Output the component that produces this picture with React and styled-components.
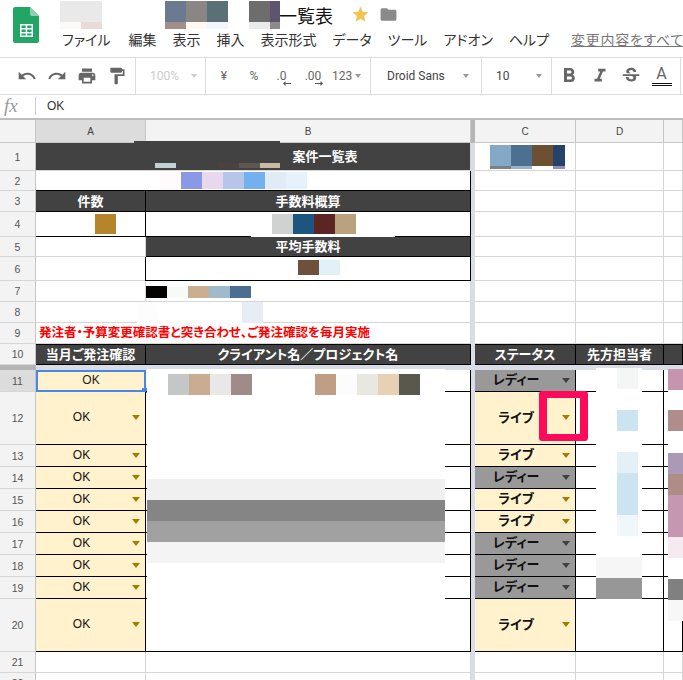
import React from "react"
import styled, { createGlobalStyle } from "styled-components"
import { MdUndo, MdRedo, MdPrint, MdFormatPaint, MdFormatBold, MdFormatItalic, MdStrikethroughS, MdStar, MdFolder } from "react-icons/md"

const CJK = `"Liberation Sans", "Noto Sans CJK JP", sans-serif`

const GlobalStyle = createGlobalStyle`
  html, body { margin: 0; padding: 0; background: #fff; overflow: hidden; }
  body { font-family: ${CJK}; font-feature-settings: "palt"; }
`

const menus = ["ファイル", "編集", "表示", "挿入", "表示形式", "データ", "ツール", "アドオン", "ヘルプ"]

// [left, top, width, [[width, height, colour]...]] pixel-blur patches that hide names
const patches = [
  [60, 1, 42, [[42, 21, "#e9e9e9"], [21, 7, "#fcfaf8"], [21, 7, "#e9dbd8"]]],
  [165, 1, 63, [[21, 21, "#6b7a90"], [21, 21, "#8a8683"], [21, 21, "#5a7078"], [21, 7, "#a08e8a"], [21, 7, "#fdf8f0"], [21, 7, "#f0f6fa"]]],
  [249, 1, 31, [[21, 21, "#6d6d6d"], [10, 21, "#5f5470"], [21, 7, "#eaeaea"], [10, 7, "#8e8a88"]]],
  [134, 141, 146, [[146, 2, "#424242"]]],
  [155, 163, 125, [[21, 5, "#c2cfd6"], [42, 5, "#424242"], [21, 5, "#4a4240"], [21, 5, "#60564e"], [20, 5, "#c9baa8"]]],
  [160, 172, 147, [[21, 17, "#fffbfc"], [21, 17, "#8a99e6"], [21, 17, "#e8d8ee"], [21, 17, "#b6c6ea"], [21, 17, "#73b0f0"], [21, 17, "#e0ebf6"], [21, 17, "#e6f2fb"]]],
  [95, 214, 21, [[21, 20, "#b5852a"]]],
  [251, 214, 144, [[21, 20, "#fff"], [21, 20, "#ced3d1"], [21, 20, "#1c5680"], [21, 20, "#5d2424"], [21, 20, "#bba27e"], [39, 20, "#fff"], [144, 3, "#fff"]]],
  [298, 260, 42, [[21, 15, "#6f513b"], [21, 15, "#e2f1f8"]]],
  [146, 286, 105, [[21, 12, "#050200"], [21, 12, "#f8faf8"], [21, 12, "#c9ae92"], [21, 12, "#9fb9cd"], [21, 12, "#4d6e90"]]],
  [137, 302, 126, [[21, 21, "#fdfdfd"], [84, 21, "#fff"], [21, 21, "#e6edf5"]]],
  [490, 145, 75, [[21, 21, "#83a9c6"], [21, 21, "#4d7090"], [21, 21, "#6d4f31"], [12, 21, "#27426a"], [21, 3, "#7c8085"], [21, 3, "#9ab0c6"], [21, 3, "#fff"], [12, 3, "#8d90bc"]]],
  [147, 369, 298, [
    [298, 5, "#fff"],
    [21, 21, "#fff"], [21, 21, "#c5c6c8"], [21, 21, "#c8ad93"], [21, 21, "#e8e8e8"], [21, 21, "#a08b8a"], [63, 21, "#fff"], [21, 21, "#c09e85"], [21, 21, "#fcfcfc"], [21, 21, "#e8e8e1"], [21, 21, "#e8d0b4"], [21, 21, "#58584f"], [25, 21, "#fff"],
    [298, 84, "#fff"], [298, 21, "#f0f0f0"], [298, 21, "#858585"], [298, 21, "#a1a1a1"], [298, 21, "#f4f4f4"], [298, 87, "#fff"],
  ]],
  [596, 368, 46, [[46, 189, "#fff"], [46, 21, "#f6f6f6"], [46, 21, "#979797"]]],
  [617, 368, 21, [[21, 21, "#f4f6f5"], [21, 21, "#fff"], [21, 21, "#cce3f0"], [21, 21, "#fff"], [21, 21, "#e3f0f6"], [21, 42, "#cce3f0"], [21, 21, "#f0f7fb"]]],
  [668, 369, 15, [[15, 21, "#c495ad"], [15, 20, "#fff"], [15, 21, "#b08c8a"], [15, 22, "#fff"], [15, 21, "#ab9ab5"], [15, 21, "#b08c86"], [15, 42, "#c697b0"], [15, 21, "#f5eaef"], [15, 21, "#fff"], [15, 21, "#808080"], [15, 21, "#f7f7f7"]]],
]

const Page = styled.div`
  position: relative;
  width: 683px;
  height: 680px;
  overflow: hidden;
  background: #fff;
`

const TitleBar = styled.header`
  display: flex;
  height: 57px;
`

const LogoSlot = styled.div`
  flex: none;
  width: 52px;
  padding: 7px 0 0 13px;
  box-sizing: border-box;
`

const TitleColumn = styled.div`
  display: flex;
  flex-direction: column;
`

const TitleLine = styled.div`
  display: flex;
  align-items: center;
  height: 29px;
  padding-left: 227px;
  font-size: 18px;
  color: #111;
  svg { flex: none; }
`

const DocName = styled.span`
  width: 54px;
  margin-right: 18px;
`

const MenuLine = styled.nav`
  display: flex;
  align-items: center;
  height: 20px;
  padding-left: 10px;
  font-size: 14px;
  color: #333;
  white-space: nowrap;
`

const MenuItem = styled.span`
  margin-right: 16px;
  &:first-child { margin-right: 18px; }
`

const SaveNote = styled.span`
  margin-left: 6px;
  color: #777;
  letter-spacing: 0.7px;
  text-decoration: underline;
`

const Toolbar = styled.div`
  display: flex;
  height: 36px;
  border-top: 1px solid #dcdcdc;
  border-bottom: 1px solid #dcdcdc;
`

const ToolGroup = styled.div`
  display: flex;
  align-items: center;
  flex: none;
  box-sizing: border-box;
  width: ${p => p.$w}px;
  padding-left: ${p => p.$pad || 0}px;
  border-right: 1px solid #dcdcdc;
  font-family: Roboto, sans-serif;
  font-size: 12px;
  color: #666;
  white-space: nowrap;
`

const ToolIcon = styled.span`
  display: flex;
  align-items: center;
  justify-content: center;
  flex: none;
  width: ${p => p.$w || 30}px;
  color: #666;
  font-size: ${p => p.$size || 20}px;
`

const Caret = styled.span`
  flex: none;
  width: 0;
  height: 0;
  margin-left: ${p => p.$gap || 6}px;
  border: 3px solid transparent;
  border-top: 4px solid ${p => p.$color || "#999"};
  border-bottom: 0;
`

const ToolText = styled.span`
  color: ${p => p.$color || "#666"};
`

const Decimal = styled.span`
  position: relative;
  display: flex;
  justify-content: center;
  flex: none;
  width: ${p => p.$w}px;
  line-height: 14px;
  svg { position: absolute; left: ${p => p.$arrow}px; top: 12px; }
`

const LetterA = styled.span`
  display: block;
  width: 20px;
  padding-bottom: 2px;
  border-bottom: 3px double #111;
  color: #666;
  font-size: 16px;
  line-height: 15px;
  text-align: center;
`

const FormulaBar = styled.div`
  display: flex;
  align-items: center;
  height: 24px;
  padding-bottom: 2px;
  box-sizing: border-box;
  font-size: 12px;
  color: #333;
`

const Fx = styled.span`
  width: 36px;
  padding-left: 4px;
  box-sizing: border-box;
  border-right: 1px solid #ccc;
  margin-right: 11px;
  font-family: "Liberation Serif", serif;
  font-style: italic;
  font-size: 19px;
  line-height: 18px;
  color: #999;
`

const Sheet = styled.main`
  border-top: 2px solid #bdbdbd;
  margin-top: -1px;
`

const Row = styled.div`
  display: grid;
  grid-template-columns: 36px 110px 325px 4px 101px 88px 1fr;
  height: ${p => p.$h}px;
`

const ColHead = styled.div`
  display: flex;
  align-items: center;
  justify-content: center;
  box-sizing: border-box;
  background: ${p => (p.$active ? "#dcdcdc" : "#f3f3f3")};
  border-right: 1px solid #c6c6c6;
  border-bottom: 1px solid #c6c6c6;
  font-size: 10px;
  color: #444;
`

const RowHead = styled(ColHead)`
  font-size: 10.5px;
  color: #555;
  border-bottom-color: #d6d6d6;
`

const FreezeV = styled.div`
  background: ${p => (p.$head ? "#b5b5b5" : "#d9dde6")};
`

const FreezeH = styled.div`
  height: 5px;
  background: #d9dde6;
  display: grid;
  grid-template-columns: 36px 1fr;
`

const FreezeCorner = styled.div`
  background: #b5b5b5;
`

const Cell = styled.div`
  position: relative;
  display: flex;
  align-items: center;
  justify-content: center;
  box-sizing: border-box;
  min-width: 0;
  grid-column: span ${p => p.$span || 1};
  border-right: 1px solid ${p => (p.$line ? "#000" : "#d6d6d6")};
  border-bottom: 1px solid ${p => (p.$line ? "#000" : "#d6d6d6")};
  ${p => p.$top && "box-shadow: inset 0 1px 0 #000;"}
  ${p => p.$left && "box-shadow: -1px 0 0 #000;"}
  font-size: 13px;
  line-height: 1;
  white-space: nowrap;
`

const DarkCell = styled(Cell)`
  background: #424242;
  color: #fff;
  font-weight: 700;
  font-size: 13px;
  padding-left: ${p => p.$offset || 0}px;
`

const NoticeCell = styled(Cell)`
  justify-content: flex-start;
  padding-left: 3px;
  color: #f00;
  font-weight: 700;
  font-size: 12.5px;
  overflow: hidden;
`

const ChipCell = styled(Cell)`
  background: ${p => (p.$kind === "ready" ? "#999999" : "#fff2cc")};
  color: #111;
  font-size: ${p => (p.$kind === "ok" ? 12 : 13)}px;
  font-weight: ${p => (p.$kind === "ok" ? 400 : 700)};
  padding: 0 18px 2px 0;
`

const SelectedCell = styled(Cell)`
  background: #fff2cc;
  border: 2px solid #4a86e8;
  font-size: 12px;
  color: #222;
  padding-bottom: 2px;
  &::after {
    content: "";
    position: absolute;
    right: -3px;
    bottom: -3px;
    width: 5px;
    height: 5px;
    background: #4a86e8;
  }
`

const DropArrow = styled.span`
  position: absolute;
  right: 5px;
  top: 50%;
  margin-top: -3px;
  width: 0;
  height: 0;
  border: 4px solid transparent;
  border-top: 5px solid ${p => (p.$kind === "ready" ? "#404040" : "#a67c00")};
  border-bottom: 0;
`

const Patch = styled.div`
  position: absolute;
  left: ${p => p.$x}px;
  top: ${p => p.$y}px;
  width: ${p => p.$w}px;
  display: flex;
  flex-wrap: wrap;
`

const Swatch = styled.span`
  width: ${p => p.$w}px;
  height: ${p => p.$h}px;
  background: ${p => p.$c};
`

const Callout = styled.div`
  position: absolute;
  left: 539px;
  top: 391px;
  width: 49px;
  height: 50px;
  box-sizing: border-box;
  border: 8px solid #fe0a5a;
  border-top-width: 7px;
  border-bottom-width: 7px;
  border-radius: 3px;
`

const SheetsLogo = () => (
  <svg width="26" height="36" viewBox="0 0 26 36">
    <path d="M2 0h15l9 9v25a2 2 0 0 1-2 2H2a2 2 0 0 1-2-2V2a2 2 0 0 1 2-2z" fill="#23a566" />
    <path d="M17 0l9 9h-7a2 2 0 0 1-2-2z" fill="#8ed1b1" />
    <path d="M7 17h13v13H7z M8.500 18.500v2.500h4.200v-2.500z M14.200 18.500v2.500h4.300v-2.500z M8.500 22.500v2.500h4.200v-2.500z M14.200 22.500v2.500h4.300v-2.500z M8.500 26.500v2h4.200v-2z M14.200 26.500v2h4.300v-2z" fill="#fff" fillRule="evenodd" />
  </svg>
)

const SmallArrow = ({ flip }) => (
  <svg width="8" height="5" viewBox="0 0 8 5" style={flip ? { transform: "scaleX(-1)" } : undefined}>
    <path d="M0 2.500L2.500 0v2H8v1H2.500v2z" fill="#555" />
  </svg>
)

const Chip = ({ kind, children }) => (
  <ChipCell $line $kind={kind}>
    {children}
    <DropArrow $kind={kind} />
  </ChipCell>
)

// plain grid cells right of the frozen column
const EmptyRight = () => (
  <>
    <FreezeV />
    <Cell />
    <Cell />
    <Cell />
  </>
)

const bodyRows = [
  { n: 12, h: 53, status: "live" },
  { n: 13, h: 22, status: "live" },
  { n: 14, h: 22, status: "ready" },
  { n: 15, h: 22, status: "live" },
  { n: 16, h: 22, status: "live" },
  { n: 17, h: 22, status: "ready" },
  { n: 18, h: 22, status: "ready" },
  { n: 19, h: 22, status: "ready" },
  { n: 20, h: 53, status: "live" },
]

const statusLabel = { live: "ライブ", ready: "レディー" }

const App = () => (
  <Page>
    <GlobalStyle />
    <TitleBar>
      <LogoSlot><SheetsLogo /></LogoSlot>
      <TitleColumn>
        <TitleLine>
          <DocName>一覧表</DocName>
          <MdStar size={19} color="#f3c350" />
          <MdFolder size={19} color="#8a8a8a" style={{ marginLeft: 9 }} />
        </TitleLine>
        <MenuLine>
          {menus.map(m => <MenuItem key={m}>{m}</MenuItem>)}
          <SaveNote>変更内容をすべて</SaveNote>
        </MenuLine>
      </TitleColumn>
    </TitleBar>

    <Toolbar>
      <ToolGroup $w={136} $pad={12}>
        <ToolIcon><MdUndo /></ToolIcon>
        <ToolIcon><MdRedo /></ToolIcon>
        <ToolIcon><MdPrint /></ToolIcon>
        <ToolIcon><MdFormatPaint /></ToolIcon>
      </ToolGroup>
      <ToolGroup $w={70} $pad={14}>
        <ToolText $color="#ccc">100%</ToolText>
        <Caret $color="#ccc" $gap={12} />
      </ToolGroup>
      <ToolGroup $w={165} $pad={3}>
        <ToolIcon $size={12}>¥</ToolIcon>
        <ToolIcon $size={12}>%</ToolIcon>
        <Decimal $w={25} $arrow={14}>.0<SmallArrow /></Decimal>
        <Decimal $w={38} $arrow={21}>.00<SmallArrow flip /></Decimal>
        <ToolText>123</ToolText>
        <Caret $gap={3} />
      </ToolGroup>
      <ToolGroup $w={111} $pad={16}>
        <ToolText $color="#444">Droid Sans</ToolText>
        <Caret $gap={18} />
      </ToolGroup>
      <ToolGroup $w={70} $pad={14}>
        <ToolText $color="#444">10</ToolText>
        <Caret $gap={26} />
      </ToolGroup>
      <ToolGroup $w={129} $pad={1}>
        <ToolIcon $w={31} $size={24}><MdFormatBold /></ToolIcon>
        <ToolIcon $w={31} $size={22}><MdFormatItalic /></ToolIcon>
        <ToolIcon $w={31} $size={22}><MdStrikethroughS /></ToolIcon>
        <ToolIcon $w={31}><LetterA>A</LetterA></ToolIcon>
      </ToolGroup>
    </Toolbar>

    <FormulaBar>
      <Fx>fx</Fx>
      OK
    </FormulaBar>

    <Sheet>
      <Row $h={23}>
        <ColHead />
        <ColHead $active>A</ColHead>
        <ColHead>B</ColHead>
        <FreezeV $head />
        <ColHead>C</ColHead>
        <ColHead>D</ColHead>
        <ColHead />
      </Row>

      <Row $h={28}><RowHead>1</RowHead><DarkCell $span={2} $offset={144}>案件一覧表</DarkCell><EmptyRight /></Row>
      <Row $h={20}><RowHead>2</RowHead><Cell $span={2} $line /><EmptyRight /></Row>
      <Row $h={21}><RowHead>3</RowHead><DarkCell $line>件数</DarkCell><DarkCell $line>手数料概算</DarkCell><EmptyRight /></Row>
      <Row $h={25}><RowHead>4</RowHead><Cell $line /><Cell $line /><EmptyRight /></Row>
      <Row $h={20}><RowHead>5</RowHead><Cell /><DarkCell $line>平均手数料</DarkCell><EmptyRight /></Row>
      <Row $h={24}><RowHead>6</RowHead><Cell /><Cell $line $left /><EmptyRight /></Row>
      <Row $h={21}><RowHead>7</RowHead><Cell /><Cell /><EmptyRight /></Row>
      <Row $h={21}><RowHead>8</RowHead><Cell /><Cell /><EmptyRight /></Row>
      <Row $h={21}><RowHead>9</RowHead><NoticeCell $span={2}>発注者・予算変更確認書と突き合わせ、ご発注確認を毎月実施</NoticeCell><EmptyRight /></Row>
      <Row $h={21}>
        <RowHead>10</RowHead>
        <DarkCell $line $top>当月ご発注確認</DarkCell>
        <DarkCell $line $top>クライアント名／プロジェクト名</DarkCell>
        <FreezeV />
        <DarkCell $line $top>ステータス</DarkCell>
        <DarkCell $line $top>先方担当者</DarkCell>
        <DarkCell $line $top />
      </Row>
      <FreezeH><FreezeCorner /></FreezeH>

      <Row $h={22}>
        <RowHead $active>11</RowHead>
        <SelectedCell>OK</SelectedCell>
        <Cell $line />
        <FreezeV />
        <Chip kind="ready">レディー</Chip>
        <Cell $line />
        <Cell $line />
      </Row>
      {bodyRows.map(r => (
        <Row key={r.n} $h={r.h}>
          <RowHead>{r.n}</RowHead>
          <Chip kind="ok">OK</Chip>
          <Cell $line />
          <FreezeV />
          <Chip kind={r.status}>{statusLabel[r.status]}</Chip>
          <Cell $line />
          <Cell $line />
        </Row>
      ))}
      <Row $h={21}><RowHead>21</RowHead><Cell /><Cell /><EmptyRight /></Row>
      <Row $h={21}><RowHead>22</RowHead><Cell /><Cell /><EmptyRight /></Row>
    </Sheet>

    {patches.map(([x, y, w, cells]) => (
      <Patch key={`${x}-${y}`} $x={x} $y={y} $w={w}>
        {cells.map(([cw, ch, c], i) => <Swatch key={i} $w={cw} $h={ch} $c={c} />)}
      </Patch>
    ))}
    <Callout />
  </Page>
)

export default App
